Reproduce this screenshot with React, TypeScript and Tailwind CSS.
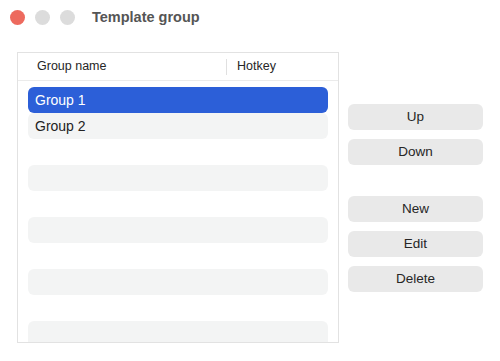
import React from "react";

const rows = Array.from({ length: 10 }, (_, i) => i);

function Btn({ label }: { label: string }) {
  return (
    <button className="h-[26px] w-[135px] rounded-[6px] bg-[#e9e9e9] text-[13.5px] text-[#262626]">
      {label}
    </button>
  );
}

export default function App() {
  return (
    <div
      className="w-[500px] h-[361px] bg-white overflow-hidden"
      style={{ fontFamily: '"Liberation Sans", Arial, sans-serif' }}
    >
      <div className="h-[35px] flex items-center pl-[10px]">
        <div className="w-[15px] h-[15px] rounded-full bg-[#ed6a5e]" />
        <div className="w-[15px] h-[15px] rounded-full bg-[#dcdcdc] ml-[10px]" />
        <div className="w-[15px] h-[15px] rounded-full bg-[#dcdcdc] ml-[10px]" />
        <div className="ml-[17px] text-[14.5px] font-bold text-[#555555]">Template group</div>
      </div>
      <div className="flex pl-[17px] pt-[17px]">
        <div className="w-[322px] h-[291px] border border-[#e2e2e2] bg-white overflow-hidden">
          <div className="h-[28px] flex items-center border-b border-[#ebebeb] text-[12.5px] text-[#262626]">
            <div className="w-[208px] pl-[19px]">Group name</div>
            <div className="w-px h-[16px] bg-[#e0e0e0]" />
            <div className="pl-[10px]">Hotkey</div>
          </div>
          <div className="px-[10px] pt-[6px] flex flex-col">
            {rows.map((i) => (
              <div
                key={i}
                className={
                  "h-[26px] shrink-0 rounded-[6px] flex items-center pl-[7px] text-[14px] " +
                  (i === 0
                    ? "bg-[#2c5fd8] text-white"
                    : i % 2 === 1
                    ? "bg-[#f3f4f4] text-[#222222]"
                    : "text-[#222222]")
                }
              >
                {i === 0 ? "Group 1" : i === 1 ? "Group 2" : ""}
              </div>
            ))}
          </div>
        </div>
        <div className="ml-[9px] mt-[52px] flex flex-col">
          <div className="flex flex-col gap-[9px]">
            <Btn label="Up" />
            <Btn label="Down" />
          </div>
          <div className="flex flex-col gap-[9px] mt-[31px]">
            <Btn label="New" />
            <Btn label="Edit" />
            <Btn label="Delete" />
          </div>
        </div>
      </div>
    </div>
  );
}
